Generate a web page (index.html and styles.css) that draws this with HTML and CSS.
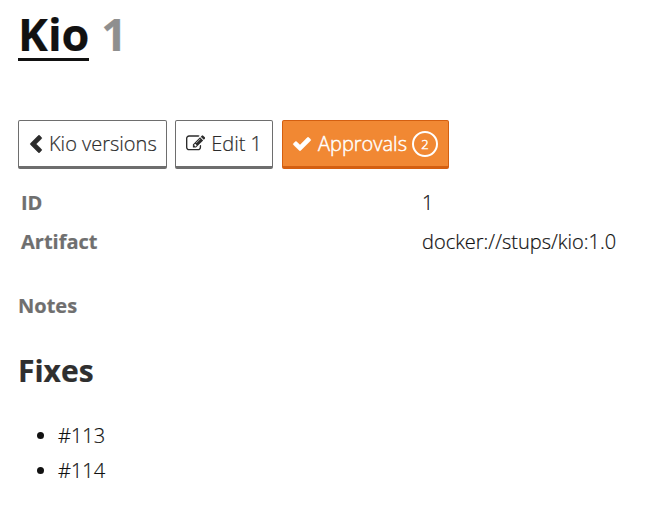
FILE: index.html
```html
<!DOCTYPE html>
<html lang="en">
<head>
<meta charset="utf-8">
<title>Kio 1</title>
<link rel="stylesheet" href="styles.css">
</head>
<body>
<main class="page">
  <h1 class="title"><a class="app">Kio</a> <span class="version">1</span></h1>
  <nav class="actions">
    <a class="btn back"><svg class="chevron" viewBox="0 0 12 18"><path d="M8.300.6Q9 0 9.700.6L11.500 2.400Q12 3 11.500 3.700L6.200 9 11.500 14.300Q12 15 11.500 15.600L9.700 17.400Q9 18 8.300 17.400L.6 9.700Q0 9 .6 8.300Z" fill="currentColor" stroke="currentColor" stroke-width=".5"/></svg><span>Kio versions</span></a>
    <a class="btn edit"><svg class="pencil" viewBox="0 0 1792 1536"><path d="M888 1056l116-116-152-152-116 116v56h96v96zm440-720q-16-16-33 1L945 687q-17 17-1 33t33-1l350-350q17-17 1-33zm80 594v190q0 119-84.500 203.500T1120 1408H288q-119 0-203.500-84.500T0 1120V288Q0 169 84.500 84.500T288 0h832q63 0 117 25 15 7 18 23 3 17-9 29l-49 49q-14 14-32 8-23-6-45-6H288q-66 0-113 47t-47 113v832q0 66 47 113t113 47h832q66 0 113-47t47-113V994q0-13 9-22l64-64q15-15 35-7t20 29zm-96-738l288 288-672 672H640V864zm444 132l-92 92-288-288 92-92q28-28 68-28t68 28l152 152q28 28 28 68t-28 68z" fill="currentColor"/></svg><span>Edit 1</span></a>
    <a class="btn primary"><svg class="check" viewBox="0 0 18 14"><path d="M.4 7.700Q0 7 .5 6.400L2.200 4.700Q3 4.200 3.700 4.700L7 8 14.300.6Q15 0 15.800.6L17.500 2.300Q18 3 17.500 3.700L7.700 13.400Q7 14 6.300 13.400Z" fill="currentColor" stroke="currentColor" stroke-width=".4"/></svg><span>Approvals</span><span class="count">2</span></a>
  </nav>
  <dl class="details">
    <dt>ID</dt><dd>1</dd>
    <dt>Artifact</dt><dd>docker://stups/kio:1.0</dd>
  </dl>
  <h4 class="notes">Notes</h4>
  <h2 class="fixes">Fixes</h2>
  <ul class="list"><li>#113</li><li>#114</li></ul>
</main>
</body>
</html>
```
FILE: styles.css
```css
body { margin: 0; background: #fff; color: #111; font: 300 20px/35px "Open Sans", sans-serif; -webkit-text-stroke: 0.2px; }
.page { padding: 4px 18px 0; }
.title { margin: 0; font-size: 45px; line-height: 60px; font-weight: 700; height: 116px; }
.app { display: inline-block; height: 54px; border-bottom: 3px solid #111; }
.version { color: #8f8f8f; }
.actions { display: flex; gap: 8px; }
.btn { box-sizing: border-box; display: flex; align-items: center; height: 49px; padding: 0 10px; border: 1px solid #6e6e6e; border-bottom-width: 3px; border-radius: 2px; white-space: nowrap; color: #2c2c2c; }
.back { width: 149px; padding-left: 11px; }
.edit { width: 98px; }
.primary { width: 167px; margin-left: 1px; color: #fff; background: #f18833; border-color: #d45f10; -webkit-text-stroke: 0.45px; }
.chevron { width: 12px; height: 18px; margin-right: 7px; overflow: visible; }
.pencil { width: 20px; height: 17px; margin-right: 6px; }
.check { width: 18px; height: 14px; margin-right: 7px; overflow: visible; }
.count { box-sizing: border-box; flex: none; width: 26px; height: 26px; margin-left: 5px; border: 2px solid; border-radius: 50%; text-align: center; font-size: 13px; line-height: 23px; }
.details { display: grid; grid-template-columns: 401px 1fr; margin: 14px 0 0 3px; line-height: 39px; }
.details dt { font-weight: 700; color: #6f6f6f; }
.details dd { margin: 0; }
.notes { margin: 27px 0 0; font-size: 20px; color: #6f6f6f; }
.fixes { margin: 26px 0 0; font-size: 30px; line-height: 44px; color: #2f2f2f; }
.list { margin: 25px 0 0; padding-left: 40px; }
```
